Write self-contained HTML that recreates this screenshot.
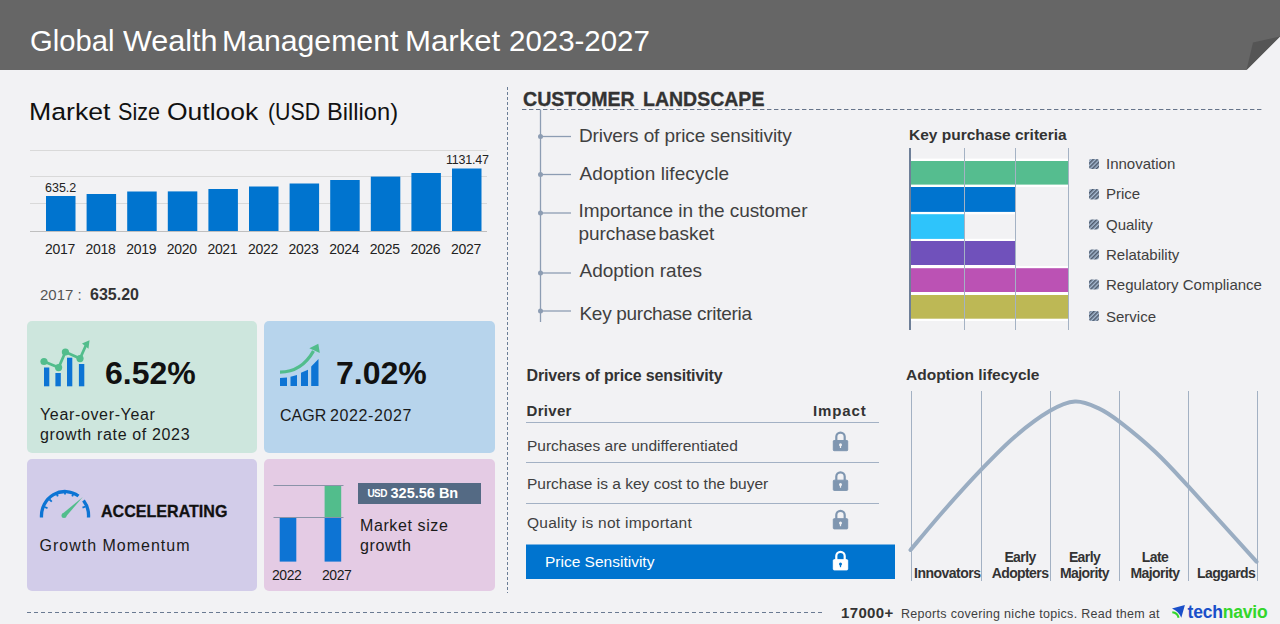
<!DOCTYPE html>
<html><head><meta charset="utf-8">
<style>
*{margin:0;padding:0;box-sizing:border-box}
html,body{width:1280px;height:624px;overflow:hidden;background:#f2f2f4;font-family:"Liberation Sans",sans-serif;color:#404040}
.a{position:absolute;white-space:nowrap;line-height:1}
#hdr{position:absolute;left:0;top:0;width:1280px;height:70px}
.card{position:absolute;border-radius:5px}
.ttl{top:25.5px;font-size:30px;color:#fff;transform-origin:0 0}
.mso{top:100px;font-size:24.5px;color:#111;transform-origin:0 0}
</style></head><body>
<svg id="hdr" width="1280" height="70" viewBox="0 0 1280 70">
<polygon points="0,0 1280,0 1280,36.5 1246.5,70 0,70" fill="#666666"/>
<polygon points="1246.5,70 1253,42.5 1280,36.5" fill="#555555"/>
</svg>
<div class="a ttl" style="left:29.53px;transform:scaleX(0.973)">Global</div><div class="a ttl" style="left:122.50px;transform:scaleX(1.019)">Wealth</div><div class="a ttl" style="left:221.74px;transform:scaleX(1.007)">Management</div><div class="a ttl" style="left:405.42px;transform:scaleX(1.039)">Market</div><div class="a ttl" style="left:509.02px;transform:scaleX(0.982)">2023-2027</div>

<div class="a mso" style="left:28.7px;transform:scaleX(1.088)">Market</div><div class="a mso" style="left:117.9px;transform:scaleX(0.880)">Size</div><div class="a mso" style="left:167.1px;transform:scaleX(1.081)">Outlook</div><div class="a mso" style="left:267.7px;transform:scaleX(0.871)">(USD</div><div class="a mso" style="left:326.8px;transform:scaleX(0.966)">Billion)</div>

<!-- bar chart -->
<svg class="a" style="left:0;top:140px" width="500" height="100" viewBox="0 140 500 100">
<g stroke="#d9d9d9" stroke-width="1">
<line x1="30" y1="150.5" x2="487" y2="150.5"/>
<line x1="30" y1="176.5" x2="487" y2="176.5"/>
<line x1="30" y1="203.5" x2="487" y2="203.5"/>
</g>
<g fill="#0074cf">
<rect x="46" y="196" width="29.5" height="35"/>
<rect x="86.6" y="194" width="29.5" height="37"/>
<rect x="127.2" y="191.5" width="29.5" height="39.5"/>
<rect x="167.8" y="191.4" width="29.5" height="39.6"/>
<rect x="208.4" y="189" width="29.5" height="42"/>
<rect x="249" y="186.5" width="29.5" height="44.5"/>
<rect x="289.6" y="183.5" width="29.5" height="47.5"/>
<rect x="330.2" y="180" width="29.5" height="51"/>
<rect x="370.8" y="176.6" width="29.5" height="54.4"/>
<rect x="411.4" y="173" width="29.5" height="58"/>
<rect x="452" y="168.5" width="29.5" height="62.5"/>
</g>
<line x1="30" y1="231.5" x2="487" y2="231.5" stroke="#bfbfbf" stroke-width="1"/>
</svg>
<div class="a" style="left:45px;top:182px;font-size:12.5px;color:#222">635.2</div>
<div class="a" style="left:446px;top:154px;font-size:12.5px;color:#222;letter-spacing:-0.2px">1131.47</div>
<div id="years" class="a" style="left:0;top:241.5px;font-size:14px;color:#222;letter-spacing:-0.3px"><span style="position:absolute;left:45.0px">2017</span><span style="position:absolute;left:85.6px">2018</span><span style="position:absolute;left:126.2px">2019</span><span style="position:absolute;left:166.8px">2020</span><span style="position:absolute;left:207.4px">2021</span><span style="position:absolute;left:248.0px">2022</span><span style="position:absolute;left:288.6px">2023</span><span style="position:absolute;left:329.2px">2024</span><span style="position:absolute;left:369.8px">2025</span><span style="position:absolute;left:410.4px">2026</span><span style="position:absolute;left:451.0px">2027</span></div>

<div class="a" style="left:40px;top:287px;font-size:15px;color:#555">2017 :</div>
<div class="a" style="left:90px;top:286.5px;font-size:16px;color:#333;font-weight:bold">635.20</div>

<!-- cards -->
<div class="card" style="left:27px;top:321px;width:230px;height:131.5px;background:#cde6dd"></div>
<div class="card" style="left:264px;top:321px;width:231px;height:131.5px;background:#b7d4ec"></div>
<div class="card" style="left:27px;top:459px;width:230px;height:131.5px;background:#d2cce9"></div>
<div class="card" style="left:264px;top:459px;width:231px;height:131.5px;background:#e4cbe4"></div>

<!-- card 1 -->
<svg class="a" style="left:38px;top:336px" width="56" height="54" viewBox="38 336 56 54">
<g fill="#0d74d4">
<rect x="44" y="367.5" width="5.3" height="18.8"/>
<rect x="55.4" y="373" width="5.4" height="13.3"/>
<rect x="67" y="357.7" width="5.3" height="28.6"/>
<rect x="78.9" y="364" width="5.4" height="22.3"/>
</g>
<g stroke="#52bd8c" stroke-width="2.7" fill="none" stroke-linejoin="round">
<polyline points="44,361.5 58.6,367.6 65.4,352 80,358.6 86.3,344.5"/>
</g>
<g fill="#52bd8c">
<circle cx="44" cy="361.5" r="3.6"/><circle cx="58.6" cy="367.6" r="3.6"/><circle cx="65.4" cy="352" r="3.6"/><circle cx="80" cy="358.6" r="3.6"/>
<polygon points="89.5,340.3 82,343.5 88.5,348.8"/>
</g>
</svg>
<div class="a" style="left:105px;top:357px;font-size:32px;font-weight:bold;color:#111">6.52%</div>
<div class="a" style="left:40px;top:405px;font-size:16px;color:#1a1a1a;line-height:20px;letter-spacing:0.65px">Year-over-Year<br>growth rate of 2023</div>

<!-- card 2 -->
<div class="a" style="left:336px;top:357px;font-size:32px;font-weight:bold;color:#111">7.02%</div>
<div class="a" style="left:280px;top:407.5px;font-size:16px;color:#1a1a1a">CAGR</div><div class="a" style="left:330px;top:407.5px;font-size:16px;color:#1a1a1a;letter-spacing:0.6px">2022-2027</div>

<!-- card 3 -->
<div class="a" style="left:100.6px;top:503px;font-size:17px;font-weight:bold;color:#111;-webkit-text-stroke:0.3px #111;transform:scaleX(0.945);transform-origin:0 0">ACCELERATING</div>
<div class="a" style="left:39.5px;top:537.5px;font-size:16px;color:#1a1a1a;letter-spacing:1px">Growth Momentum</div>

<!-- card 4 -->
<div class="a" style="left:360px;top:516px;font-size:16px;color:#1a1a1a;line-height:19.5px;letter-spacing:0.6px">Market size<br>growth</div>

<!-- separators -->
<svg class="a" style="left:0;top:0" width="1280" height="624">
<line x1="507.5" y1="87" x2="507.5" y2="593" stroke="#6b7d96" stroke-width="1" stroke-dasharray="3 2"/>
<line x1="522" y1="109.5" x2="1262.5" y2="109.5" stroke="#66748a" stroke-width="1" stroke-dasharray="4.4 2.6"/>
<line x1="27" y1="612.5" x2="822" y2="612.5" stroke="#6a7a92" stroke-width="1" stroke-dasharray="4 3"/>
</svg>

<div class="a" style="left:522.9px;top:87.5px;font-size:21px;font-weight:bold;color:#333;-webkit-text-stroke:0.35px #333;transform:scaleX(0.932);transform-origin:0 0">CUSTOMER</div><div class="a" style="left:642.82px;top:87.5px;font-size:21px;font-weight:bold;color:#333;-webkit-text-stroke:0.35px #333;transform:scaleX(0.929);transform-origin:0 0">LANDSCAPE</div>


<!-- customer landscape tree -->
<svg class="a" style="left:530px;top:105px" width="50" height="225" viewBox="530 105 50 225">
<g stroke="#8d9db3" stroke-width="1.3" fill="none">
<line x1="540.5" y1="110" x2="540.5" y2="322"/>
<line x1="540.5" y1="136.5" x2="571" y2="136.5"/>
<line x1="540.5" y1="174.5" x2="571" y2="174.5"/>
<line x1="540.5" y1="213" x2="571" y2="213"/>
<line x1="540.5" y1="273" x2="571" y2="273"/>
<line x1="540.5" y1="311" x2="571" y2="311"/>
</g>
<g fill="#8d9db3">
<circle cx="540.5" cy="136.5" r="2.5"/><circle cx="540.5" cy="174.5" r="2.5"/><circle cx="540.5" cy="213" r="2.5"/><circle cx="540.5" cy="273" r="2.5"/><circle cx="540.5" cy="311" r="2.5"/>
</g>
</svg>
<div class="a" style="left:579px;top:126px;font-size:19px;color:#404040;letter-spacing:-0.1px">Drivers of price sensitivity</div>
<div class="a" style="left:579.5px;top:164px;font-size:19px;color:#404040;letter-spacing:0.1px">Adoption lifecycle</div>
<div class="a" style="left:578.5px;top:199px;font-size:19px;color:#404040;line-height:23px;letter-spacing:-0.05px">Importance in the customer<br><span style="word-spacing:-3px">purchase basket</span></div>
<div class="a" style="left:579.5px;top:261px;font-size:19px;color:#404040">Adoption rates</div>
<div class="a" style="left:579.5px;top:303.5px;font-size:19px;color:#404040;letter-spacing:-0.3px">Key purchase criteria</div>

<!-- key purchase criteria -->
<div class="a" style="left:909px;top:126.5px;font-size:15.5px;font-weight:bold;color:#333">Key purchase criteria</div>
<svg class="a" style="left:900px;top:145px" width="180" height="190" viewBox="900 145 180 190">
<g fill="#ffffff">
<rect x="910" y="158.6" width="158.5" height="28.4"/>
<rect x="910" y="184.6" width="105.4" height="29.7"/>
<rect x="910" y="211.9" width="54.5" height="29.5"/>
<rect x="910" y="238.8" width="105.4" height="28.6"/>
<rect x="910" y="266" width="158.5" height="28.6"/>
<rect x="910" y="292.5" width="158.5" height="28.4"/>
</g>
<rect x="910" y="161" width="158.5" height="23.6" fill="#55bd8f"/>
<rect x="910" y="187" width="105.4" height="24.9" fill="#0074cf"/>
<rect x="910" y="214.2" width="54.5" height="24.7" fill="#2ec4fb"/>
<rect x="910" y="241" width="105.4" height="24" fill="#7051bb"/>
<rect x="910" y="268.2" width="158.5" height="23.8" fill="#bb52b4"/>
<rect x="910" y="295" width="158.5" height="23.7" fill="#bdb855"/>
<g stroke="#a4b2c4" stroke-width="1">
<line x1="964.5" y1="148" x2="964.5" y2="330"/>
<line x1="1015.5" y1="148" x2="1015.5" y2="330"/>
<line x1="1068.5" y1="148" x2="1068.5" y2="330"/>
</g>
<line x1="910" y1="148" x2="910" y2="330" stroke="#6e7f98" stroke-width="2"/>
</svg>
<svg class="a" style="left:1085px;top:150px" width="20" height="180" viewBox="1085 150 20 180">
<defs><pattern id="hatch" width="3" height="3" patternUnits="userSpaceOnUse" patternTransform="rotate(45)">
<rect width="3" height="3" fill="#a8bcd4"/><rect width="1.55" height="3" fill="#4e5a6c"/></pattern></defs>
<g fill="url(#hatch)">
<rect x="1089" y="159" width="10" height="10" rx="2"/>
<rect x="1089" y="189" width="10" height="10.5" rx="2"/>
<rect x="1089" y="219.5" width="10" height="10" rx="2"/>
<rect x="1089" y="249.5" width="10" height="10" rx="2"/>
<rect x="1089" y="279.5" width="10" height="10" rx="2"/>
<rect x="1089" y="311" width="10" height="10" rx="2"/>
</g>
</svg>
<div class="a" style="left:1106px;top:156px;font-size:15px;color:#404040">Innovation</div>
<div class="a" style="left:1106px;top:186px;font-size:15px;color:#404040">Price</div>
<div class="a" style="left:1106px;top:217px;font-size:15px;color:#404040">Quality</div>
<div class="a" style="left:1106px;top:247px;font-size:15px;color:#404040">Relatability</div>
<div class="a" style="left:1106px;top:277px;font-size:15px;color:#404040">Regulatory Compliance</div>
<div class="a" style="left:1106px;top:309px;font-size:15px;color:#404040">Service</div>

<!-- drivers table -->
<div class="a" style="left:526.5px;top:367.5px;font-size:16px;font-weight:bold;color:#333;letter-spacing:-0.15px">Drivers of price sensitivity</div>
<div class="a" style="left:526.5px;top:403px;font-size:15px;font-weight:bold;color:#333;letter-spacing:0.3px">Driver</div>
<div class="a" style="left:813px;top:403px;font-size:15px;font-weight:bold;color:#333;letter-spacing:0.9px">Impact</div>
<svg class="a" style="left:520px;top:418px" width="380" height="165" viewBox="520 418 380 165">
<g stroke="#a3b1c4" stroke-width="1.2">
<line x1="526" y1="422.5" x2="879" y2="422.5"/>
<line x1="526" y1="462.5" x2="879" y2="462.5"/>
<line x1="526" y1="503.5" x2="879" y2="503.5"/>
</g>
<rect x="526" y="544.5" width="369" height="34.5" fill="#0074cf"/>
</svg>
<div class="a" style="left:527px;top:438px;font-size:15.5px;color:#404040">Purchases are undifferentiated</div>
<div class="a" style="left:527px;top:476px;font-size:15.5px;color:#404040">Purchase is a key cost to the buyer</div>
<div class="a" style="left:527px;top:515px;font-size:15.5px;color:#404040;letter-spacing:0.27px">Quality is not important</div>
<div class="a" style="left:545px;top:554px;font-size:15.5px;color:#fff">Price Sensitivity</div>

<!-- adoption lifecycle -->
<div class="a" style="left:906px;top:367px;font-size:15.5px;font-weight:bold;color:#333">Adoption lifecycle</div>
<svg class="a" style="left:900px;top:385px" width="380" height="200" viewBox="900 385 380 200">
<g stroke="#a3b1c3" stroke-width="1">
<line x1="911.5" y1="391" x2="911.5" y2="581"/>
<line x1="981.5" y1="391" x2="981.5" y2="581"/>
<line x1="1050.5" y1="391" x2="1050.5" y2="581"/>
<line x1="1119.5" y1="391" x2="1119.5" y2="581"/>
<line x1="1188.5" y1="391" x2="1188.5" y2="581"/>
<line x1="1257.5" y1="391" x2="1257.5" y2="581"/>
</g>
<path d="M910.5,550.0 C916.0,543.5 931.5,524.6 943.3,511.2 C955.1,497.8 969.4,481.9 981.4,469.4 C993.4,456.9 1004.0,446.0 1015.4,436.2 C1026.8,426.4 1040.1,416.6 1050.0,410.8 C1059.9,405.0 1067.0,402.0 1075.0,401.5 C1083.0,401.0 1090.3,404.5 1097.7,407.9 C1105.1,411.3 1109.8,414.3 1119.4,421.7 C1129.0,429.1 1143.9,441.2 1155.4,452.0 C1166.9,462.8 1171.8,468.4 1188.6,486.7 C1205.4,505.0 1245.2,549.2 1256.5,561.7" stroke="#9aadc2" stroke-width="4" fill="none" stroke-linecap="round"/>
</svg>
<div class="a" style="left:914px;top:566px;font-size:14px;font-weight:bold;color:#333;letter-spacing:-0.5px">Innovators</div>
<div class="a" style="left:990px;top:549px;font-size:14px;font-weight:bold;color:#333;text-align:center;line-height:16px;width:60px;letter-spacing:-0.6px">Early<br>Adopters</div>
<div class="a" style="left:1054.5px;top:549px;font-size:14px;font-weight:bold;color:#333;text-align:center;line-height:16px;width:60px;letter-spacing:-0.6px">Early<br>Majority</div>
<div class="a" style="left:1125px;top:549px;font-size:14px;font-weight:bold;color:#333;text-align:center;line-height:16px;width:60px;letter-spacing:-0.6px">Late<br>Majority</div>
<div class="a" style="left:1197px;top:566px;font-size:14px;font-weight:bold;color:#333;letter-spacing:-0.6px">Laggards</div>

<!-- footer -->
<div class="a" style="left:841px;top:604.5px;font-size:15px;font-weight:bold;color:#333;letter-spacing:0.35px">17000+</div>
<div class="a" style="left:901px;top:607.5px;font-size:12.5px;color:#404040;letter-spacing:0.3px">Reports covering niche topics. Read them at</div>

<!-- card 2 icon -->
<svg class="a" style="left:274px;top:338px" width="52" height="52" viewBox="274 338 52 52">
<g fill="#0d74d4">
<polygon points="280,378 287,377.5 287,386 280,386"/>
<polygon points="290.5,376.8 297,375 297,386 290.5,386"/>
<polygon points="301,372.8 308,369.7 308,386 301,386"/>
<polygon points="311.2,366.5 318.5,358.9 318.5,386 311.2,386"/>
</g>
<path d="M280,372.2 C293,372 305,366 313.5,351" stroke="#52bd8c" stroke-width="3.3" fill="none"/>
<polygon points="309.3,348.3 318.3,343.8 319.8,353" fill="#52bd8c"/>
</svg>

<!-- gauge icon -->
<svg class="a" style="left:36px;top:484px" width="60" height="40" viewBox="36 484 60 40">
<g stroke="#0d74d4" stroke-width="3.3" fill="none">
<path d="M41.5,517.5 A23.5,24.5 0 0 1 78.5,496"/>
<path d="M83.5,500.5 A23.5,24.5 0 0 1 88.5,517.5"/>
</g>
<g stroke="#0d74d4" stroke-width="1.8">
<line x1="44.5" y1="507" x2="47.5" y2="508.2"/>
<line x1="49.5" y1="499.5" x2="51.8" y2="501.6"/>
<line x1="56.5" y1="493.5" x2="57.8" y2="496.3"/>
<line x1="65" y1="491.5" x2="65" y2="494.5"/>
<line x1="73.5" y1="493.5" x2="72.2" y2="496.3"/>
<line x1="85.5" y1="506.5" x2="82.5" y2="507.7"/>
</g>
<polygon points="82.8,497 65.6,517 62.4,513.8" fill="#52bd8c"/>
<circle cx="64" cy="515.5" r="2.5" fill="#52bd8c"/>
</svg>

<!-- card 4 chart -->
<svg class="a" style="left:268px;top:480px" width="220" height="90" viewBox="268 480 220 90">
<g stroke="#8a93a8" stroke-width="1">
<line x1="273.5" y1="485.5" x2="343.5" y2="485.5"/>
<line x1="273.5" y1="517.5" x2="343.5" y2="517.5"/>
</g>
<rect x="279.7" y="518" width="16.6" height="43.6" fill="#0d74d4"/>
<rect x="324.6" y="518" width="16.6" height="43.6" fill="#0d74d4"/>
<rect x="324.6" y="486" width="16.6" height="31" fill="#52bd8c"/>
<rect x="358" y="483" width="123" height="21" fill="#546a84"/>
</svg>
<div class="a" style="left:272px;top:568px;font-size:14px;color:#1a1a1a;letter-spacing:-0.45px">2022</div>
<div class="a" style="left:322px;top:568px;font-size:14px;color:#1a1a1a;letter-spacing:-0.45px">2027</div>
<div class="a" style="left:367.5px;top:488.5px;font-size:10px;font-weight:bold;color:#fff;letter-spacing:-0.6px">USD</div>
<div class="a" style="left:390.5px;top:485.5px;font-size:14.5px;font-weight:bold;color:#fff">325.56 Bn</div>

<!-- locks -->
<svg class="a" style="left:825px;top:425px" width="30" height="150" viewBox="825 425 30 150">
<defs>
<g id="lk">
<path d="M-4.2,0 V-4 A4.2,4.2 0 0 1 4.2,-4 V0" stroke-width="2.2" fill="none"/>
<rect x="-7.2" y="-0.3" width="14.4" height="10.2" rx="0.8"/>
</g>
</defs>
<g fill="#7f96b0" stroke="#7f96b0"><use href="#lk" x="840.5" y="440.8"/></g>
<g fill="#7f96b0" stroke="#7f96b0"><use href="#lk" x="840.5" y="480.5"/></g>
<g fill="#7f96b0" stroke="#7f96b0"><use href="#lk" x="840.5" y="519"/></g>
<g fill="#ffffff" stroke="#ffffff"><use href="#lk" x="840.5" y="560"/></g>
<g fill="#f2f2f4">
<circle cx="840.5" cy="444.8" r="1.5"/><rect x="839.9" y="445" width="1.2" height="3"/>
<circle cx="840.5" cy="484.5" r="1.5"/><rect x="839.9" y="484.7" width="1.2" height="3"/>
<circle cx="840.5" cy="523" r="1.5"/><rect x="839.9" y="523.2" width="1.2" height="3"/>
</g>
<g fill="#0074cf">
<circle cx="840.5" cy="564" r="1.5"/><rect x="839.9" y="564.2" width="1.2" height="3"/>
</g>
</svg>

<!-- technavio logo -->
<svg class="a" style="left:1168px;top:602px" width="20" height="20" viewBox="1168 602 20 20">
<path d="M1172,608.4 L1184.9,605 L1181.3,617.8 Q1179,611.2 1172,608.4 Z" fill="#1a4fc9"/>
<path d="M1172.3,612.3 Q1177.5,612.8 1178.6,617.8" stroke="#33d62b" stroke-width="2" fill="none"/>
</svg>
<div class="a" style="left:1187.5px;top:604px;font-size:17.5px;font-weight:bold;color:#1a4fc9;letter-spacing:-0.2px">tech<span style="color:#33d62b">navio</span></div>
</body>

</html>
